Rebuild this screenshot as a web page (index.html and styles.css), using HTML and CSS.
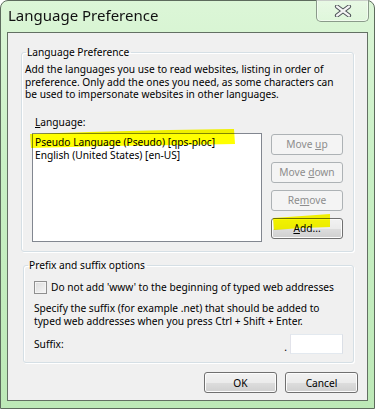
FILE: index.html
```html
<!DOCTYPE html>
<html lang="en">
<head>
    <meta charset="UTF-8">
    <title>Language Preference</title>
    <link rel="stylesheet" href="styles.css">
</head>
<body>
    <div class="window">
        <!-- Title bar -->
        <div class="titlebar">
            <span class="title">Language Preference</span>
            <div class="close-btn">
                <svg width="18" height="12" viewBox="0 0 18 12">
                    <path d="M3 1.5 L15 10.5 M15 1.5 L3 10.5" stroke="#4a4f55" stroke-width="4.2" stroke-linecap="round"/>
                    <path d="M3 1.5 L15 10.5 M15 1.5 L3 10.5" stroke="#f4f4f4" stroke-width="2.2" stroke-linecap="round"/>
                </svg>
            </div>
        </div>

        <!-- Client area -->
        <div class="client">
            <fieldset class="group group-lang">
                <legend>Language Preference</legend>
                <div class="group-body">
                    <p class="desc">Add the languages you use to read websites, listing in order of<br>preference. Only add the ones you need, as some characters can<br>be used to impersonate websites in other languages.</p>
                    <div class="lang-label"><u>L</u>anguage:</div>
                    <div class="lang-row">
                        <div class="listbox">
                            <div class="item">Pseudo Language (Pseudo) [qps-ploc]</div>
                            <div class="item">English (United States) [en-US]</div>
                        </div>
                        <div class="side-buttons">
                            <button class="btn" disabled>Move <u>u</u>p</button>
                            <button class="btn" disabled>Move <u>d</u>own</button>
                            <button class="btn" disabled>Re<u>m</u>ove</button>
                            <button class="btn"><u>A</u>dd...</button>
                        </div>
                    </div>
                </div>
            </fieldset>

            <fieldset class="group group-suffix">
                <legend>Prefix and suffix options</legend>
                <div class="group-body">
                    <label class="check-row">
                        <span class="checkbox"></span>
                        <span>Do not add 'www' to the beginning of typed web addresses</span>
                    </label>
                    <p class="desc suffix-desc">Specify the suffix (for example .net) that should be added to<br>typed web addresses when you press Ctrl + Shift + Enter.</p>
                    <div class="suffix-row">
                        <span class="suffix-label">Suffix:</span>
                        <span class="dot">.</span>
                        <span class="suffix-input"></span>
                    </div>
                </div>
            </fieldset>

            <div class="dialog-buttons">
                <button class="btn">OK</button>
                <button class="btn">Cancel</button>
            </div>

            <!-- highlighter marks -->
            <svg class="marker marker-item" width="210" height="20" viewBox="0 0 210 20">
                <path d="M1 5 L60 3 L140 1 L205 0 L206 15 L150 16 L80 17 L2 19 Z" fill="#ffff00"/>
            </svg>
            <svg class="marker marker-add" width="60" height="18" viewBox="0 0 60 18">
                <path d="M1 4 L30 2 L58 0 L58 13 L30 14 L2 16 Z" fill="#ffff00"/>
            </svg>
        </div>
    </div>
</body>
</html>
```

FILE: styles.css
```css
* {
    margin: 0;
    padding: 0;
    box-sizing: border-box;
}

body {
    width: 375px;
    height: 409px;
    overflow: hidden;
    font-family: 'Noto Sans', 'Open Sans', sans-serif;
    font-size: 10.2px;
    color: #000;
}

.window {
    width: 375px;
    height: 409px;
    border: 1px solid #5d6b5d;
    border-top-right-radius: 8px;
    border-top-left-radius: 8px;
    background: linear-gradient(180deg, #dcf6d7 0%, #c9f0c5 40%, #bde9b7 100%);
    display: flex;
    flex-direction: column;
    position: relative;
}

/* Title bar */
.titlebar {
    height: 31px;
    display: flex;
    align-items: flex-start;
    justify-content: space-between;
    padding-left: 7px;
}

.title {
    font-size: 15px;
    line-height: 15px;
    margin-top: 7px;
    color: #111;
}

.close-btn {
    width: 53px;
    height: 22px;
    margin-top: -1px;
    margin-right: 5px;
    border: 1px solid #8a9a8a;
    border-top: none;
    border-radius: 0 0 5px 5px;
    background: linear-gradient(180deg, rgba(255,255,255,0.35), rgba(255,255,255,0.15));
    box-shadow: inset 0 0 0 1px rgba(255,255,255,0.5);
    display: flex;
    justify-content: center;
    align-items: center;
}

/* Client area */
.client {
    flex: 1;
    margin: 0 6px 7px 6px;
    border: 1px solid #637063;
    background: #f0f0f0;
    position: relative;
    padding: 13px 13px 0 13px;
    display: flex;
    flex-direction: column;
}

.group {
    border: 1px solid #d5dfe5;
    border-radius: 3px;
    box-shadow: inset 1px 1px 0 #fff, 1px 1px 0 #fff;
    padding: 0;
}

.group legend {
    margin-left: 4px;
    padding: 0 2px 0 1px;
    line-height: 13px;
}

.group-lang {
    height: 206px;
}

.group-lang .group-body {
    padding: 4px 4px 0 3px;
}

.desc {
    line-height: 12.5px;
}

.lang-label {
    margin: 15px 0 4px 10px;
    line-height: 13px;
}

.lang-row {
    display: flex;
    gap: 9px;
    margin-left: 7px;
}

.listbox {
    width: 230px;
    height: 109px;
    background: #fff;
    border: 1px solid #828790;
    padding: 2px 2px;
}

.item {
    line-height: 13px;
}

.side-buttons {
    display: flex;
    flex-direction: column;
    gap: 7px;
    padding-top: 1px;
}

.btn {
    width: 72px;
    height: 21px;
    font-family: inherit;
    font-size: 10.2px;
    color: #000;
    border: 1px solid #707070;
    border-radius: 3px;
    background: linear-gradient(180deg, #f2f2f2 0%, #ebebeb 50%, #dddddd 51%, #cfcfcf 100%);
    box-shadow: inset 0 0 0 1px #fcfcfc;
}

.btn:disabled {
    color: #8d8d8d;
    border-color: #adb2b5;
    background: #f4f4f4;
    box-shadow: none;
}

.group-suffix {
    margin-top: 7px;
    margin-left: 2px;
    height: 104px;
}

.group-suffix .group-body {
    padding: 9px 10px 0 10px;
}

.check-row {
    display: flex;
    align-items: center;
    gap: 4px;
    line-height: 13px;
}

.checkbox {
    width: 13px;
    height: 13px;
    border: 1px solid #8f8f8f;
    background: linear-gradient(135deg, #dcdcdc, #f6f6f6);
    box-shadow: inset 0 0 0 1px #f4f4f4;
}

.suffix-desc {
    margin-top: 8px;
}

.suffix-row {
    display: flex;
    align-items: flex-end;
    margin-top: 7px;
    height: 20px;
}

.suffix-label {
    flex: 1;
    align-self: center;
    line-height: 13px;
}

.dot {
    line-height: 13px;
    margin-right: 3px;
}

.suffix-input {
    width: 53px;
    height: 20px;
    background: #fff;
    border: 1px solid #abadb3;
    border-top-color: #e3e9ef;
    border-left-color: #e2e3ea;
    border-right-color: #dbdfe6;
    border-bottom-color: #e3e9ef;
}

.dialog-buttons {
    display: flex;
    justify-content: flex-end;
    gap: 8px;
    margin-top: 9px;
    margin-right: -4px;
}

.dialog-buttons .btn {
    width: 73px;
    height: 21px;
}

/* highlighter */
.marker {
    position: absolute;
    mix-blend-mode: multiply;
}

.marker-item {
    left: 21px;
    top: 96px;
}

.marker-add {
    left: 264px;
    top: 181px;
}
```
